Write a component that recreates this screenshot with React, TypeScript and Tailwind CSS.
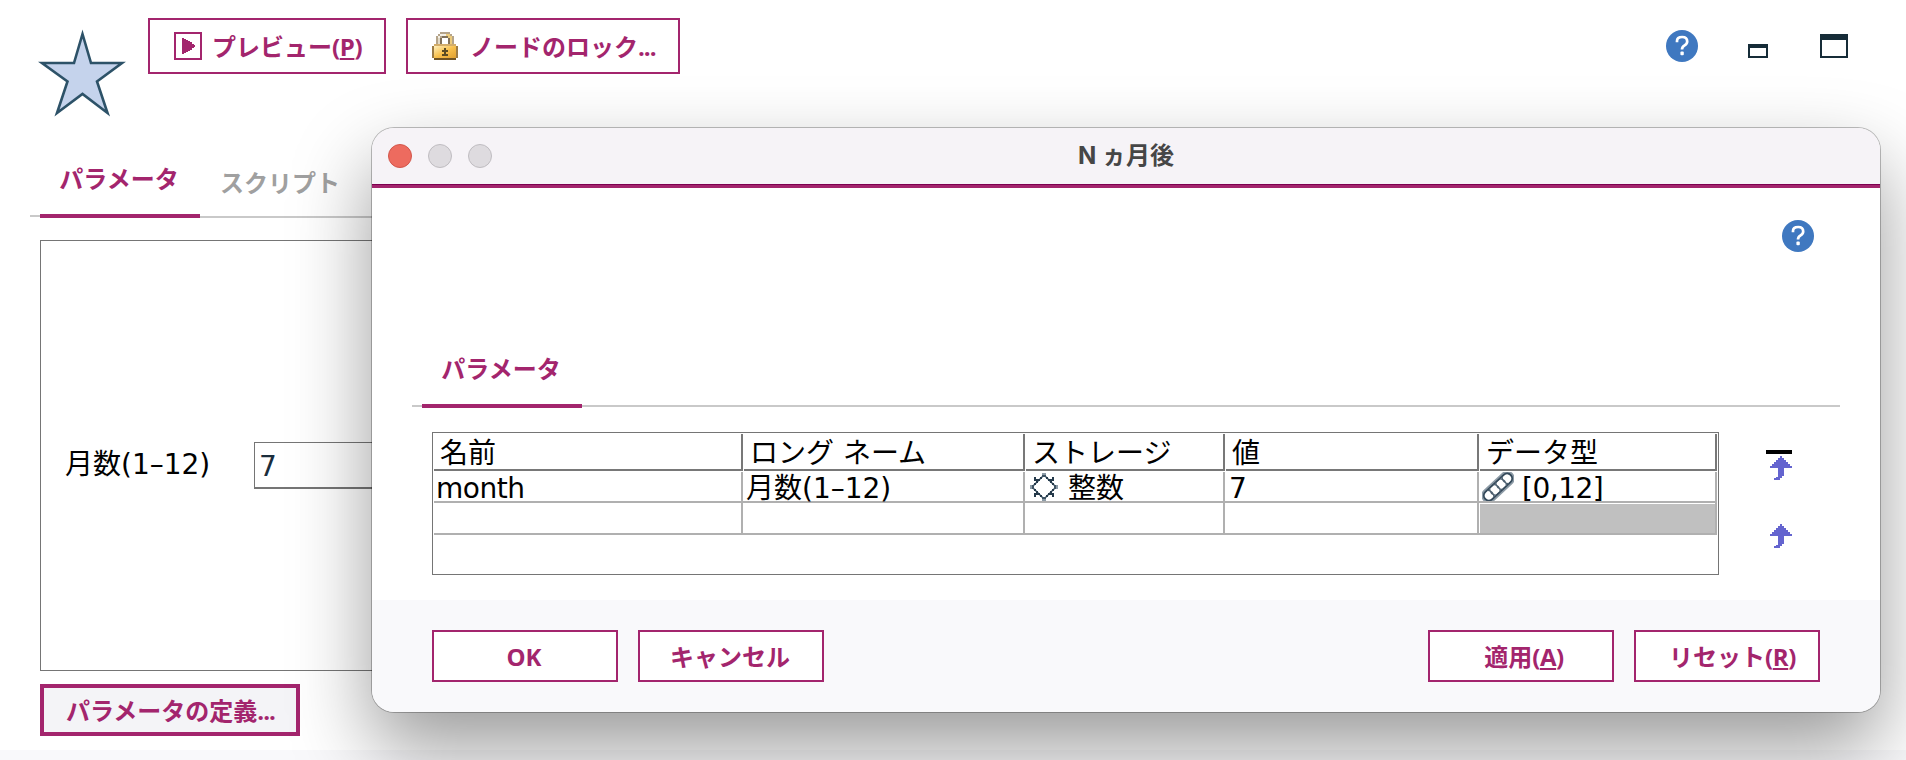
import React from "react";
import clsx from "clsx";

const UI_FONT = "font-['Open_Sans','Noto_Sans_CJK_JP',sans-serif]";
const BODY_FONT = "font-['DejaVu_Sans','Noto_Sans_CJK_JP',sans-serif]";

function StarIcon() {
  return (
    <svg width="88" height="88" viewBox="0 0 88 88" className="block">
      <path
        d="M44.5 5 L53 34 H84 L59 52.5 L69.5 84 L44.5 65 L19 84 L29.5 52.5 L4 34 H36 Z"
        fill="#c5d3ec"
        stroke="#2d5268"
        strokeWidth="2.6"
      />
    </svg>
  );
}

function PlayIcon() {
  return (
    <svg width="28" height="28" viewBox="0 0 28 28" shapeRendering="crispEdges">
      <rect x="1" y="1" width="26" height="26" fill="#fff" stroke="#a3256d" strokeWidth="2" />
      <path d="M8 6h2v1h2v1h2v1h2v1h2v2h2v1h1v2h-1v1h-2v2h-2v1h-2v1h-2v1h-2v1H8z" fill="#a3256d" />
    </svg>
  );
}

function LockIcon() {
  return (
    <svg width="26" height="28" viewBox="0 0 13 14" shapeRendering="crispEdges">
      <defs>
        <linearGradient id="lockBody" x1="0" y1="0" x2="1" y2="1">
          <stop offset="0" stopColor="#fff0bd" />
          <stop offset="0.5" stopColor="#f8c04c" />
          <stop offset="1" stopColor="#e0a030" />
        </linearGradient>
      </defs>
      <path d="M4 0h5v1h1v1h1v4H9V3H8V2H5v1H4v3H2V2h1V1h1z" fill="#b5a48a" />
      <path d="M4 1h3v1H4v1H3V2h1z" fill="#f4f0e6" />
      <path d="M3 3h1v3H3z" fill="#e2dac8" />
      <path d="M7 1h2v1h1v4H9V3H8V2H7z" fill="#eccb7c" />
      <path d="M5 2h3v1H5zM4 3h1v3H4zM8 3h1v3H8z" fill="#81725b" />
      <path d="M5 3h3v3H5z" fill="#fff" />
      <path d="M1 6h11v1h1v6h-1v1H1v-1H0V7h1z" fill="#9b7b45" />
      <rect x="1" y="7" width="11" height="6" fill="url(#lockBody)" />
      <path d="M1 6h11v1H1z" fill="#d3ad69" />
      <path d="M1 13h11v1H1z" fill="#6f5324" />
      <path d="M6 8h1v1h1v1H7v1h1v1H5v-1h1v-1H5V9h1z" fill="#5b4c24" />
    </svg>
  );
}

function HelpIcon() {
  return (
    <svg width="32" height="32" viewBox="0 0 32 32" className="block">
      <circle cx="16" cy="16" r="16" fill="#3f78c0" />
      <path
        d="M11 12.2V11q0-4 5.2-4q5 0 5 4.4q0 2.4-2.6 4t-2.6 4"
        fill="none"
        stroke="#fff"
        strokeWidth="2.7"
      />
      <rect x="14.4" y="21.6" width="3.4" height="3.6" rx="1" fill="#fff" />
    </svg>
  );
}

function IntegerIcon() {
  return (
    <svg width="28" height="28" viewBox="0 0 28 28" shapeRendering="crispEdges">
      <path d="M14 2L26 14L14 26L2 14Z" fill="none" stroke="#9aa8b2" strokeWidth="2" />
      <path
        d="M10 4h2v2h-2v2H8v2H6v2H4v-2h2V8H4V6h0V4h2v2h4zM18 4h-2v2h2v2h2v2h2v2h2v-2h-2V8h2V4h-2v2h-4zM10 24h2v-2h-2v-2H8v-2H6v-2H4v2h2v2H4v4h2v-2h4zM18 24h-2v-2h2v-2h2v-2h2v-2h2v2h-2v2h2v4h-2v-2h-4z"
        fill="#24394a"
      />
      <path d="M12 0h4v4h-4zM12 24h4v4h-4zM0 12h4v4H0zM24 12h4v4h-4z" fill="#8b9aa6" />
      <path d="M12 2h4v2h-4zM12 24h4v2h-4zM2 12h2v4H2zM24 12h2v4h-2z" fill="#3d5262" />
    </svg>
  );
}

function ChainIcon() {
  return (
    <svg width="32" height="30" viewBox="0 0 32 30">
      <g transform="rotate(-43 16 15)" fill="none">
        <rect x="-2.5" y="9" width="37" height="12" rx="6" stroke="#8d9ba6" strokeWidth="3.2" />
        <rect x="-1.5" y="10" width="35" height="10" rx="5" stroke="#34495a" strokeWidth="1.8" />
        <path
          d="M6 10q4 5 0 10M9 10q-4 5 0 10M14.5 10q4 5 0 10M17.5 10q-4 5 0 10M23 10q4 5 0 10M26 10q-4 5 0 10"
          stroke="#4d6070"
          strokeWidth="1.3"
        />
      </g>
    </svg>
  );
}

function ArrowUpIcon() {
  return (
    <svg width="22" height="24" viewBox="0 0 22 24" shapeRendering="crispEdges" className="block">
      <path
        d="M10 0h2v2h2v2h2v2h2v2h2v2h2v2h-8v8h-2v2h-2v2H4v-2h2v-1h2v-9H0v-2h2V8h2V6h2V4h2V2h2z"
        fill="#6464cf"
      />
    </svg>
  );
}

interface ButtonProps {
  children: React.ReactNode;
  className?: string;
}

function Button({ children, className }: ButtonProps) {
  return (
    <button
      className={clsx(
        "flex items-center border-[#a3256d] pt-0.5 text-2xl font-bold whitespace-nowrap text-[#a3256d]",
        className
      )}
    >
      {children}
    </button>
  );
}

function Mnemonic({ letter }: { letter: string }) {
  return (
    <span className="tracking-[-0.4px]">
      (<span className="underline decoration-2 underline-offset-2">{letter}</span>)
    </span>
  );
}

const columns = ["名前", "ロング ネーム", "ストレージ", "値", "データ型"];
const grid = "grid grid-cols-[309px_282px_200px_254px_238px]";

function ParameterTable() {
  const row = [
    <span className="-ml-px tracking-[-0.5px]">month</span>,
    "月数(1–12)",
    <>
      <span className="ml-0.5">
        <IntegerIcon />
      </span>
      <span className="ml-2.5">整数</span>
    </>,
    <span className="ml-px">7</span>,
    <>
      <ChainIcon />
      <span className="ml-2 tracking-[-0.5px]">[0,12]</span>
    </>,
  ];

  return (
    <div
      className={clsx(
        "h-[143px] w-[1287px] border border-[#757575] p-px text-[28px] leading-[25px] text-black",
        BODY_FONT
      )}
    >
      <div className={grid}>
        {columns.map((name, i) => (
          <div
            key={name}
            className={clsx(
              "flex h-[37px] items-center border-r-2 border-b-2 border-[#787878] pt-1 pl-1.5",
              i > 0 && "ml-px"
            )}
          >
            {name}
          </div>
        ))}
      </div>
      <div className={clsx("mt-px", grid)}>
        {row.map((cell, i) => (
          <div
            key={i}
            className={clsx(
              "flex h-[31px] items-center border-r-2 border-b-2 border-[#b0b0b0] pl-[3px]",
              i === 2 || i === 4 ? "[&>span:last-child]:pt-1" : "pt-1",
              i === 4 && "overflow-hidden"
            )}
          >
            {cell}
          </div>
        ))}
      </div>
      <div className={grid}>
        {columns.map((name, i) => (
          <div key={name} className="h-8 border-r-2 border-b-2 border-[#b0b0b0]">
            {i === 4 && <div className="mt-px ml-px h-[29px] bg-[#c0c0c0]" />}
          </div>
        ))}
      </div>
    </div>
  );
}

function ParameterDialog() {
  return (
    <div className="absolute top-32 left-[372px] flex h-[584px] w-[1508px] flex-col overflow-hidden rounded-[22px] bg-white shadow-[0_0_0_1px_rgba(0,0,0,0.25),0_36px_80px_rgba(0,0,0,0.4)]">
      <div className="grid h-14 shrink-0 grid-cols-[1fr_auto_1fr] items-center bg-[#f6f3f7]">
        <div className="flex gap-4 pl-4">
          <span className="size-6 rounded-full border border-[#d2564b] bg-[#ed6b5f]" />
          <span className="size-6 rounded-full border border-[#bfbcc0] bg-[#dedbdf]" />
          <span className="size-6 rounded-full border border-[#bfbcc0] bg-[#dedbdf]" />
        </div>
        <h1 className="font-['Inter','Noto_Sans_CJK_JP',sans-serif] text-2xl font-bold text-[#464646]">
          N ヵ月後
        </h1>
      </div>
      <div className="h-1 shrink-0 border-t border-[#7d0050] bg-[#a3256d]" />

      <div className="flex justify-end pt-8 pr-[66px]">
        <HelpIcon />
      </div>

      <div className="mt-[100px] flex h-14 items-end pr-10 pl-10">
        <div className="mb-px h-0.5 w-2.5 bg-[#c9c9c9]" />
        <div className="flex h-14 w-40 justify-center border-b-4 border-[#a3256d] pr-0.5 text-2xl leading-[34px] font-bold text-[#a3256d]">
          パラメータ
        </div>
        <div className="mb-px h-0.5 flex-1 bg-[#c9c9c9]" />
      </div>

      <div className="mt-6 flex pl-[60px]">
        <ParameterTable />
        <div className="ml-[47px] pt-[18px]">
          <div className="mb-0.5 h-1 w-[26px] bg-black" />
          <div className="flex flex-col gap-11 pl-1">
            <ArrowUpIcon />
            <ArrowUpIcon />
          </div>
        </div>
      </div>

      <div className="mt-auto flex h-28 shrink-0 items-start gap-5 bg-[#f9f9fb] px-[60px] pt-[30px]">
        <Button className="h-[52px] w-[186px] justify-center border-2 bg-white pr-0.5">OK</Button>
        <Button className="h-[52px] w-[186px] justify-center border-2 bg-white pr-0.5">キャンセル</Button>
        <Button className="ml-auto h-[52px] w-[186px] justify-center border-2 bg-white pl-1.5">
          適用
          <Mnemonic letter="A" />
        </Button>
        <Button className="h-[52px] w-[186px] justify-center border-2 bg-white pl-[11px]">
          リセット
          <Mnemonic letter="R" />
        </Button>
      </div>
    </div>
  );
}

export default function App() {
  return (
    <div className={clsx("relative flex h-[760px] w-[1906px] flex-col overflow-hidden bg-white", UI_FONT)}>
      <header className="flex h-[158px] shrink-0 items-start pl-[38px]">
        <div className="mt-[29px]">
          <StarIcon />
        </div>
        <Button className="mt-[18px] ml-[22px] h-14 w-[238px] gap-2.5 border-2 pl-6">
          <span className="-mt-0.5">
            <PlayIcon />
          </span>
          <span>
            プレビュー
            <Mnemonic letter="P" />
          </span>
        </Button>
        <Button className="mt-[18px] ml-5 h-14 w-[274px] gap-3 border-2 pl-6">
          <span className="-mt-0.5">
            <LockIcon />
          </span>
          <span>
            ノードのロック<span className="tracking-[-1px]">...</span>
          </span>
        </Button>
        <div className="mt-[30px] ml-auto flex pr-[58px]">
          <HelpIcon />
          <div className="mt-3.5 ml-[50px] h-3.5 w-5 border-2 border-t-4 border-[#162c38]" />
          <div className="mt-1 ml-[52px] h-6 w-7 border-2 border-t-6 border-[#162c38]" />
        </div>
      </header>

      <nav className="flex h-[60px] w-[1870px] shrink-0 items-end pl-[30px] text-2xl font-bold">
        <div className="mb-px h-0.5 w-2.5 bg-[#c9c9c9]" />
        <div className="flex h-[60px] w-40 justify-center border-b-4 border-[#a3256d] pr-0.5 leading-[42px] text-[#a3256d]">
          パラメータ
        </div>
        <div className="h-[60px] flex-1 border-b-2 border-[#c9c9c9] pl-5 leading-[50px] text-[#a0a0a0]">
          スクリプト
        </div>
      </nav>

      <section
        className={clsx(
          "mt-[22px] ml-10 flex h-[431px] w-[1800px] shrink-0 border border-[#757575] pt-[201px] pl-6 text-[28px]",
          BODY_FONT
        )}
      >
        <label className="w-[189px] leading-[46px] text-black">月数(1–12)</label>
        <div className="h-[47px] w-[600px] border border-b-2 border-[#757575] pl-1 leading-[48px] text-[#1b2d3c]">
          7
        </div>
      </section>

      <Button className="mt-[13px] ml-10 h-[52px] w-[260px] shrink-0 border-4 bg-[#f4f4f7] pl-[22px]">
        <span>
          パラメータの定義<span className="tracking-[-1px]">...</span>
        </span>
      </Button>
      <div className="mt-3.5 h-2.5 shrink-0 bg-[#f9f9fb]" />

      <ParameterDialog />
    </div>
  );
}
